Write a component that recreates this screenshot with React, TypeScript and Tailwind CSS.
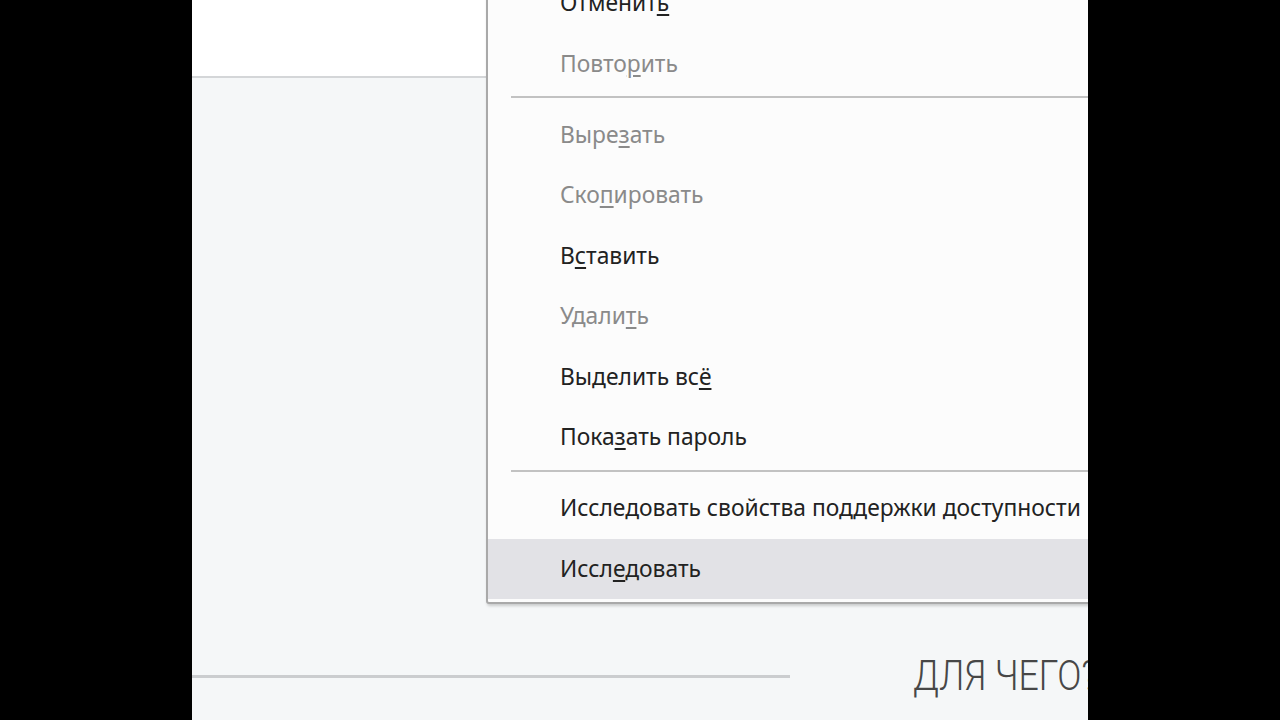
import React from "react";

type Entry = { pre: string; u: string; post: string; enabled: boolean; hl?: boolean };
type Item = Entry | { sep: true };

const items: Item[] = [
  { pre: "Отменит", u: "ь", post: "", enabled: true },
  { pre: "Повто", u: "р", post: "ить", enabled: false },
  { sep: true },
  { pre: "Выре", u: "з", post: "ать", enabled: false },
  { pre: "Ско", u: "п", post: "ировать", enabled: false },
  { pre: "В", u: "с", post: "тавить", enabled: true },
  { pre: "Удали", u: "т", post: "ь", enabled: false },
  { pre: "Выделить вс", u: "ё", post: "", enabled: true },
  { pre: "Пока", u: "з", post: "ать пароль", enabled: true },
  { sep: true },
  { pre: "Исследовать свойства поддержки доступности", u: "", post: "", enabled: true },
  { pre: "Иссл", u: "е", post: "довать", enabled: true, hl: true },
];

export default function App() {
  return (
    <div
      className="flex w-[1280px] h-[720px] bg-black overflow-hidden"
      style={{ fontFamily: '"Noto Sans", "Open Sans", sans-serif' }}
    >
      <div className="w-[192px] shrink-0 bg-black" />
      <div className="relative w-[896px] shrink-0 overflow-hidden bg-[#f5f7f8] flex flex-col">
        <div className="h-[78px] shrink-0 bg-white border-b-2 border-[#d4d6d8] flex">
          <span className="ml-[216px] -mt-[26px] text-[21px] leading-none text-[#222]">р</span>
        </div>
        <div className="h-[578px] shrink-0" />
        <div className="h-[40px] shrink-0 flex items-center">
          <div className="w-[598px] h-[3px] shrink-0 bg-[#cbcdcf]" />
          <span
            className="ml-[123px] shrink-0 text-[42px] leading-none font-light text-[#474747] whitespace-nowrap origin-left scale-x-[0.85]"
            style={{ fontFamily: 'Roboto, "Liberation Sans", sans-serif' }}
          >
            ДЛЯ ЧЕГО?
          </span>
        </div>

        <div className="absolute left-[294px] top-[-32px] w-[720px] bg-[#fcfcfc] border-2 border-[#a9a9a9] rounded-[3px] pt-[3px] pb-[3px] shadow-[1px_2px_3px_rgba(0,0,0,0.18)]">
          {items.map((it, i) => {
            if ("sep" in it) {
              return (
                <div key={i} className="h-[10.5px] pt-[2px] pl-[23px]">
                  <div className="h-[2px] bg-[#c2c2c2]" />
                </div>
              );
            }
            return (
              <div
                key={i}
                className={`h-[60.5px] flex items-center pl-[72px] text-[22.8px] whitespace-nowrap ${
                  it.hl ? "bg-[#e2e2e6]" : ""
                } ${it.enabled ? "text-[#222222]" : "text-[#8a8a8a]"}`}
              >
                <span>
                  {it.pre}
                  {it.u && <span className="underline underline-offset-[3px] decoration-2">{it.u}</span>}
                  {it.post}
                </span>
              </div>
            );
          })}
        </div>
      </div>
      <div className="w-[192px] shrink-0 bg-black" />
    </div>
  );
}
